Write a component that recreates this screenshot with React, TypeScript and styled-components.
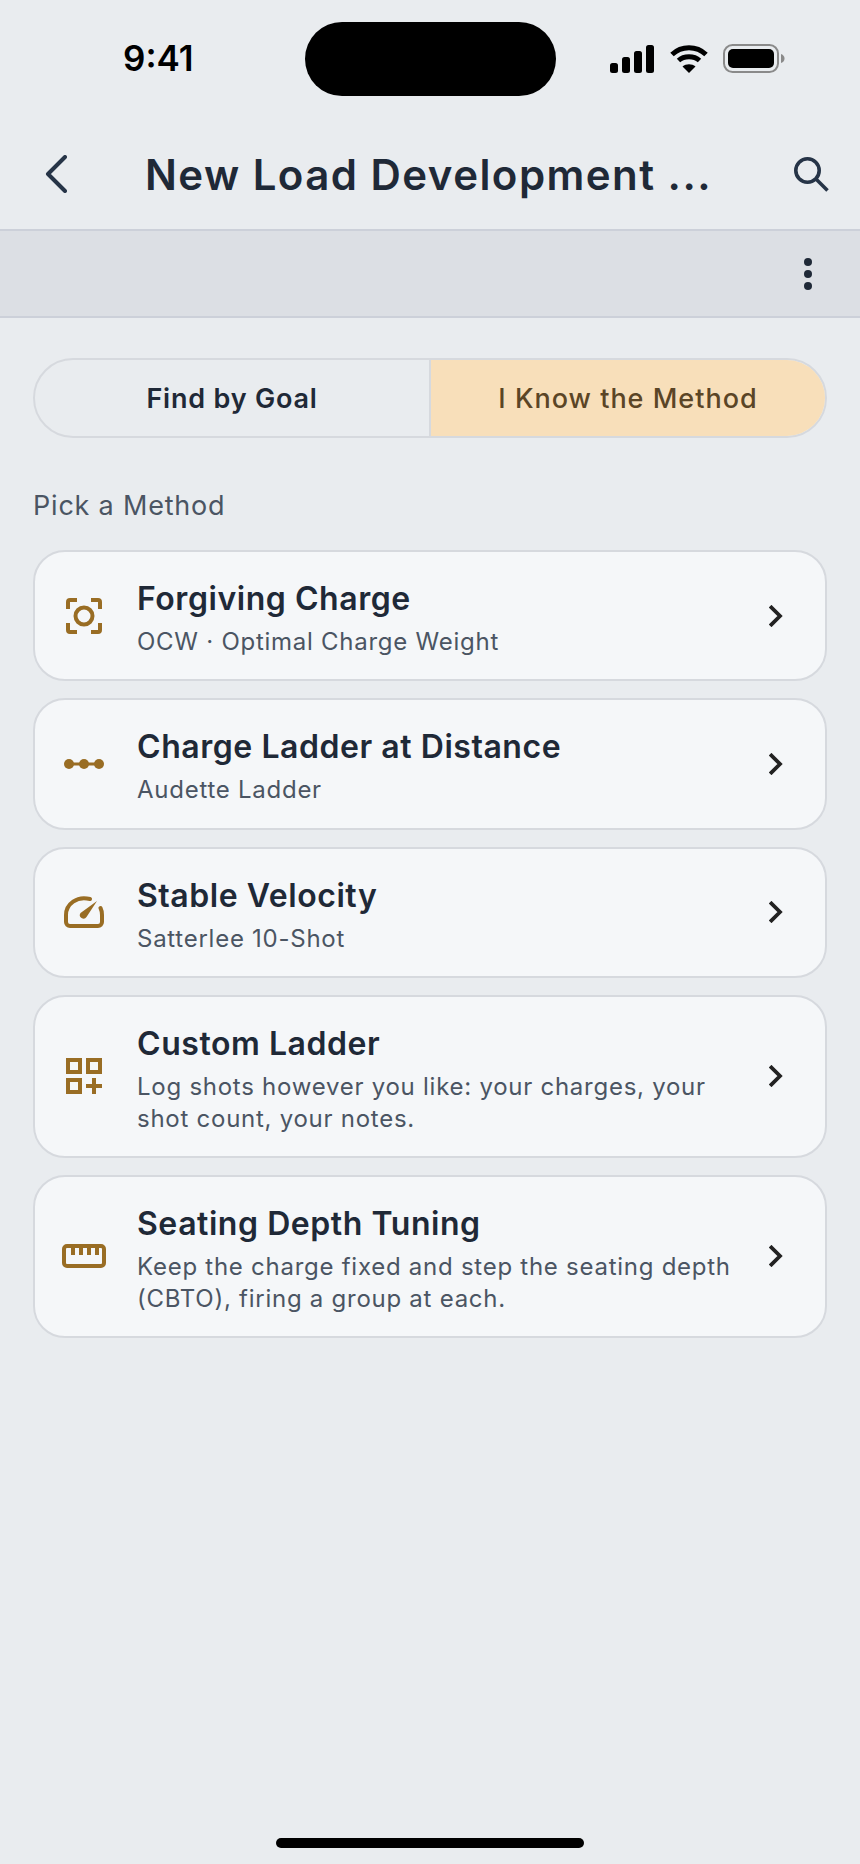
import React from "react";
import styled, { createGlobalStyle } from "styled-components";

const GlobalStyle = createGlobalStyle`
  html, body {
    margin: 0;
    padding: 0;
    background: #e9ecef;
  }
  * {
    box-sizing: border-box;
  }
`;

const Screen = styled.div`
  position: relative;
  width: 860px;
  height: 1864px;
  overflow: hidden;
  background: #e9ecef;
  font-family: Inter, "Liberation Sans", sans-serif;
  color: #1f2937;
`;

const StatusBar = styled.div`
  height: 119px;
  padding: 22px 75px 0 123px;
  display: flex;
  align-items: flex-start;
`;

const Clock = styled.div`
  width: 72px;
  margin-top: 19px;
  font-size: 35px;
  line-height: 34px;
  font-weight: 600;
  color: #000;
`;

const Island = styled.div`
  width: 251px;
  height: 74px;
  margin-left: 110px;
  border-radius: 37px;
  background: #000;
`;

const StatusIcons = styled.div`
  margin-left: auto;
  margin-top: 22px;
  display: flex;
  align-items: center;
  gap: 15.5px;
`;

const NavBar = styled.div`
  height: 112px;
  padding: 0 29px 0 36px;
  display: flex;
  align-items: center;
  border-bottom: 2px solid #ccd0d9;
`;

const NavButton = styled.div`
  width: 40px;
  display: flex;
  align-items: center;
  justify-content: center;
`;

const NavTitle = styled.div`
  flex: 1;
  text-align: center;
  font-size: 42px;
  font-weight: 600;
  letter-spacing: 1.45px;
  color: #1f2937;
  white-space: nowrap;
  padding-right: 10px;
`;

const SubBar = styled.div`
  height: 87px;
  padding-right: 47px;
  display: flex;
  align-items: center;
  justify-content: flex-end;
  background: #dcdfe4;
  border-bottom: 2px solid #ccd0d9;
`;

const Content = styled.div`
  padding: 40px 33px 0;
`;

const Segments = styled.div`
  height: 80px;
  display: flex;
  border: 2px solid #d6d9de;
  border-radius: 40px;
  overflow: hidden;
`;

const Segment = styled.div<{ $active?: boolean }>`
  flex: 1;
  display: flex;
  align-items: center;
  justify-content: center;
  font-size: 27px;
  font-weight: ${(p) => (p.$active ? 500 : 600)};
  letter-spacing: ${(p) => (p.$active ? "1px" : "0.8px")};
  background: ${(p) => (p.$active ? "#f8dfba" : "transparent")};
  color: ${(p) => (p.$active ? "#5b4526" : "#1f2937")};
  & + & {
    border-left: 2px solid #d6d9de;
  }
`;

const SectionLabel = styled.div`
  margin-top: 50px;
  margin-bottom: 26px;
  font-size: 27px;
  line-height: 36px;
  letter-spacing: 0.8px;
  color: #4b5563;
`;

const MethodList = styled.div`
  display: flex;
  flex-direction: column;
  gap: 17px;
`;

const Card = styled.div`
  display: flex;
  align-items: center;
  min-height: 131.3px;
  padding: 0 37px 0 27px;
  background: #f5f7f9;
  border: 2px solid #d6d9de;
  border-radius: 32px;
`;

const IconSlot = styled.div`
  width: 44px;
  margin-right: 31px;
  flex-shrink: 0;
  display: flex;
  justify-content: center;
`;

const CardText = styled.div`
  flex: 1;
  min-width: 0;
  padding: 25px 0 21px;
`;

const CardTitle = styled.div`
  font-size: 32px;
  line-height: 44px;
  font-weight: 600;
  letter-spacing: 0.55px;
  color: #1f2937;
`;

const CardSub = styled.div`
  margin-top: 5px;
  font-size: 24px;
  line-height: 32px;
  letter-spacing: 0.74px;
  color: #4b5563;
`;

const Chevron = styled.div`
  width: 24px;
  margin-left: 20px;
  flex-shrink: 0;
  display: flex;
  justify-content: center;
`;

const HomeBar = styled.div`
  position: absolute;
  left: 276px;
  bottom: 16px;
  width: 308px;
  height: 10px;
  border-radius: 5px;
  background: #000;
`;

const ACCENT = "#996d24";

const Signal = () => (
  <svg width="44" height="28" viewBox="0 0 44 28" fill="#000">
    <rect x="0" y="18" width="8" height="10" rx="2.5" />
    <rect x="12" y="12" width="8" height="16" rx="2.5" />
    <rect x="24" y="6" width="8" height="22" rx="2.5" />
    <rect x="36" y="0" width="8" height="28" rx="2.5" />
  </svg>
);

const Wifi = () => (
  <svg width="38" height="28" viewBox="0 0 38 28" fill="none" stroke="#000">
    <path d="M2 9.5 C11.5 0.5 26.5 0.5 36 9.5" strokeWidth="5" />
    <path d="M8.5 15.5 C14 10.5 24 10.5 29.5 15.5" strokeWidth="5" />
    <path d="M19 28 L12.5 21.5 C16 18.5 22 18.5 25.5 21.5 Z" fill="#000" stroke="none" />
  </svg>
);

const Battery = () => (
  <svg width="62" height="29" viewBox="0 0 62 29">
    <rect x="1" y="1" width="54" height="27" rx="8.5" fill="none" stroke="#8a8a8a" strokeWidth="2" />
    <rect x="5" y="5" width="46" height="19" rx="5" fill="#000" />
    <path d="M58 10 C60.5 11 61.5 12.5 61.5 14.5 C61.5 16.5 60.5 18 58 19 Z" fill="#8a8a8a" />
  </svg>
);

const BackIcon = () => (
  <svg width="22" height="38" viewBox="0 0 22 38" fill="none" stroke="#263447" strokeWidth="4" strokeLinecap="round" strokeLinejoin="round">
    <path d="M20 2 L3 19 L20 36" />
  </svg>
);

const SearchIcon = () => (
  <svg width="35" height="35" viewBox="0 0 35 35" fill="none" stroke="#263447" strokeWidth="3.6">
    <circle cx="13.5" cy="13.5" r="11.7" />
    <path d="M22 22 L33.5 33.5" />
  </svg>
);

const DotsIcon = () => (
  <svg width="10" height="32" viewBox="0 0 10 32" fill="#1f2937">
    <circle cx="5" cy="4" r="4" />
    <circle cx="5" cy="16" r="4" />
    <circle cx="5" cy="28" r="4" />
  </svg>
);

const ChevronIcon = () => (
  <svg width="14" height="22" viewBox="0 0 14 22" fill="none" stroke="#222" strokeWidth="3.8" strokeLinecap="square" strokeLinejoin="miter">
    <path d="M2.5 2.5 L11 11 L2.5 19.5" />
  </svg>
);

const FocusIcon = () => (
  <svg width="36" height="36" viewBox="0 0 36 36" fill="none" stroke={ACCENT} strokeWidth="4">
    <path d="M2 11 V4 a2 2 0 0 1 2 -2 H11" />
    <path d="M25 2 H32 a2 2 0 0 1 2 2 V11" />
    <path d="M34 25 V32 a2 2 0 0 1 -2 2 H25" />
    <path d="M11 34 H4 a2 2 0 0 1 -2 -2 V25" />
    <circle cx="18" cy="18" r="8.5" />
  </svg>
);

const DotsLineIcon = () => (
  <svg width="40" height="12" viewBox="0 0 40 12" fill={ACCENT}>
    <circle cx="5" cy="6" r="5" />
    <circle cx="20" cy="6" r="5" />
    <circle cx="35" cy="6" r="5" />
    <rect x="5" y="4.5" width="30" height="3" />
  </svg>
);

const GaugeIcon = () => (
  <svg width="40" height="32" viewBox="0 0 40 32" fill="none" stroke={ACCENT} strokeWidth="4">
    <path d="M26 3 C13 -0.5 2 8 2 19 V26 a4 4 0 0 0 4 4 H34 a4 4 0 0 0 4 -4 V19 C38 16 37.5 14 36.5 12" strokeLinecap="round" />
    <path d="M33 5 L22.5 21 a3.6 3.6 0 0 1 -6 -4 Z" fill={ACCENT} stroke="none" />
  </svg>
);

const GridPlusIcon = () => (
  <svg width="36" height="36" viewBox="0 0 36 36" fill="none" stroke={ACCENT} strokeWidth="4">
    <rect x="2" y="2" width="12" height="12" />
    <rect x="22" y="2" width="12" height="12" />
    <rect x="2" y="22" width="12" height="12" />
    <path d="M20 28 H36 M28 20 V36" />
  </svg>
);

const RulerIcon = () => (
  <svg width="44" height="24" viewBox="0 0 44 24" fill="none" stroke={ACCENT} strokeWidth="4">
    <rect x="2" y="2" width="40" height="20" rx="3" />
    <path d="M11 2 V11 M19 2 V11 M27 2 V11 M35 2 V11" />
  </svg>
);

const methods = [
  { icon: <FocusIcon />, title: "Forgiving Charge", sub: "OCW · Optimal Charge Weight" },
  { icon: <DotsLineIcon />, title: "Charge Ladder at Distance", sub: "Audette Ladder" },
  { icon: <GaugeIcon />, title: "Stable Velocity", sub: "Satterlee 10-Shot" },
  { icon: <GridPlusIcon />, title: "Custom Ladder", sub: "Log shots however you like: your charges, your shot count, your notes." },
  { icon: <RulerIcon />, title: "Seating Depth Tuning", sub: "Keep the charge fixed and step the seating depth (CBTO), firing a group at each." },
];

const App: React.FunctionComponent<{}> = () => {
  return (
    <Screen>
      <GlobalStyle />
      <StatusBar>
        <Clock>9:41</Clock>
        <Island />
        <StatusIcons>
          <Signal />
          <Wifi />
          <Battery />
        </StatusIcons>
      </StatusBar>
      <NavBar>
        <NavButton><BackIcon /></NavButton>
        <NavTitle>New Load Development ...</NavTitle>
        <NavButton><SearchIcon /></NavButton>
      </NavBar>
      <SubBar><DotsIcon /></SubBar>
      <Content>
        <Segments>
          <Segment>Find by Goal</Segment>
          <Segment $active>I Know the Method</Segment>
        </Segments>
        <SectionLabel>Pick a Method</SectionLabel>
        <MethodList>
          {methods.map((m) => (
            <Card key={m.title}>
              <IconSlot>{m.icon}</IconSlot>
              <CardText>
                <CardTitle>{m.title}</CardTitle>
                <CardSub>{m.sub}</CardSub>
              </CardText>
              <Chevron><ChevronIcon /></Chevron>
            </Card>
          ))}
        </MethodList>
      </Content>
      <HomeBar />
    </Screen>
  );
};

export default App;
